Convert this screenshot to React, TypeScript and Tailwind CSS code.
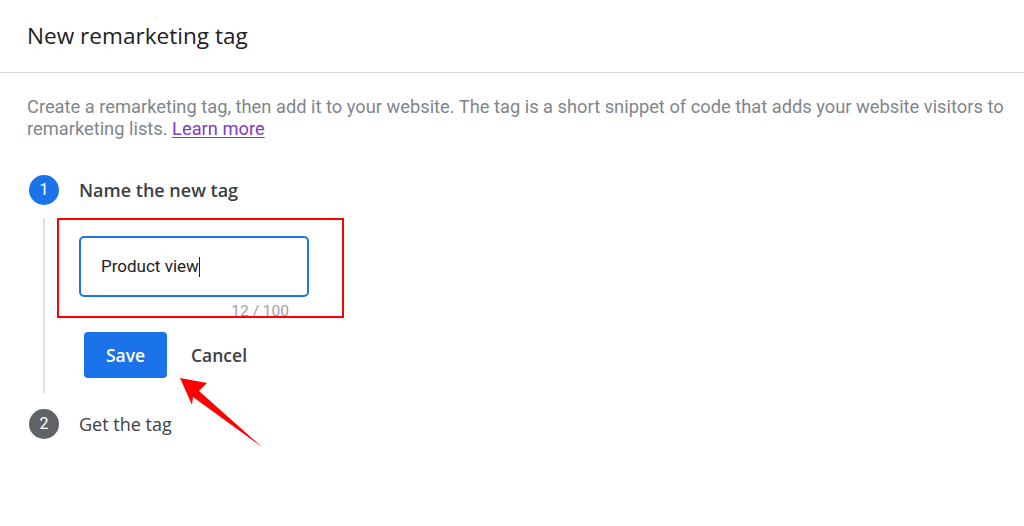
import React from 'react'

const Arrow: React.FC = () => (
    <svg className="absolute left-0 top-0 pointer-events-none" width="1024" height="526" viewBox="0 0 1024 526">
        <polygon points="180,378 207,383 199,391 262,447 193,397 192,405" fill="#ff0000" />
    </svg>
)

export default function App() {
    return (
        <div className="relative w-[1024px] h-[526px] bg-white overflow-hidden font-['Roboto',sans-serif]">
            {/* Header */}
            <div className="h-[73px] border-b border-[#dadce0] px-[27px] pt-[20px]">
                <h1 className="text-[22.6px] leading-[32px] text-[#202124] font-['Open_Sans','Roboto',sans-serif]">New remarketing tag</h1>
            </div>

            {/* Description */}
            <p className="pl-[27px] pr-[8px] pt-[23px] text-[18.3px] leading-[22px] text-[#80868b]">
                Create a remarketing tag, then add it to your website. The tag is a short snippet of code that adds your website visitors to remarketing lists.{' '}
                <a href="#" className="text-[#7e3ac8] underline underline-offset-2">Learn more</a>
            </p>

            {/* Steps */}
            <div className="pl-[29px] pt-[35px]">
                <div className="flex items-center gap-[20px]">
                    <div className="w-[30px] h-[30px] rounded-full bg-[#1a73e8] text-white text-[16px] flex items-center justify-center">1</div>
                    <span className="text-[18px] font-semibold text-[#3c4043] font-['Open_Sans','Roboto',sans-serif]">Name the new tag</span>
                </div>

                <div className="ml-[14px] mt-[13px] border-l-2 border-[#e0e0e0] pl-[12px] pb-[15px]">
                    <div className="w-[287px] h-[100px] border-2 border-[#ff0000] pl-[20px] pt-[16px] overflow-hidden">
                        <div className="w-[230px] h-[61px] border-2 border-[#1a73e8] rounded-[5px] flex items-center px-[20px] text-[17px] text-[#202124]">
                            Product view<span className="inline-block w-px h-[20px] bg-[#202124]" />
                        </div>
                        <div className="w-[230px] text-right pr-[20px] pt-[4px] text-[15.5px] leading-[20px] text-[#9aa0a6]">12 / 100</div>
                    </div>

                    <div className="flex items-center mt-[14px] ml-[27px] gap-[24px] font-['Open_Sans','Roboto',sans-serif]">
                        <button className="w-[83px] h-[46px] rounded-[4px] bg-[#1a73e8] text-white text-[17.5px] font-semibold">Save</button>
                        <button className="text-[17.5px] font-semibold text-[#3c4043]">Cancel</button>
                    </div>
                </div>

                <div className="flex items-center gap-[20px] mt-[16px]">
                    <div className="w-[30px] h-[30px] rounded-full bg-[#5f6368] text-white text-[16px] flex items-center justify-center">2</div>
                    <span className="text-[18px] text-[#3c4043] font-['Open_Sans','Roboto',sans-serif]">Get the tag</span>
                </div>
            </div>

            <Arrow />
        </div>
    )
}
